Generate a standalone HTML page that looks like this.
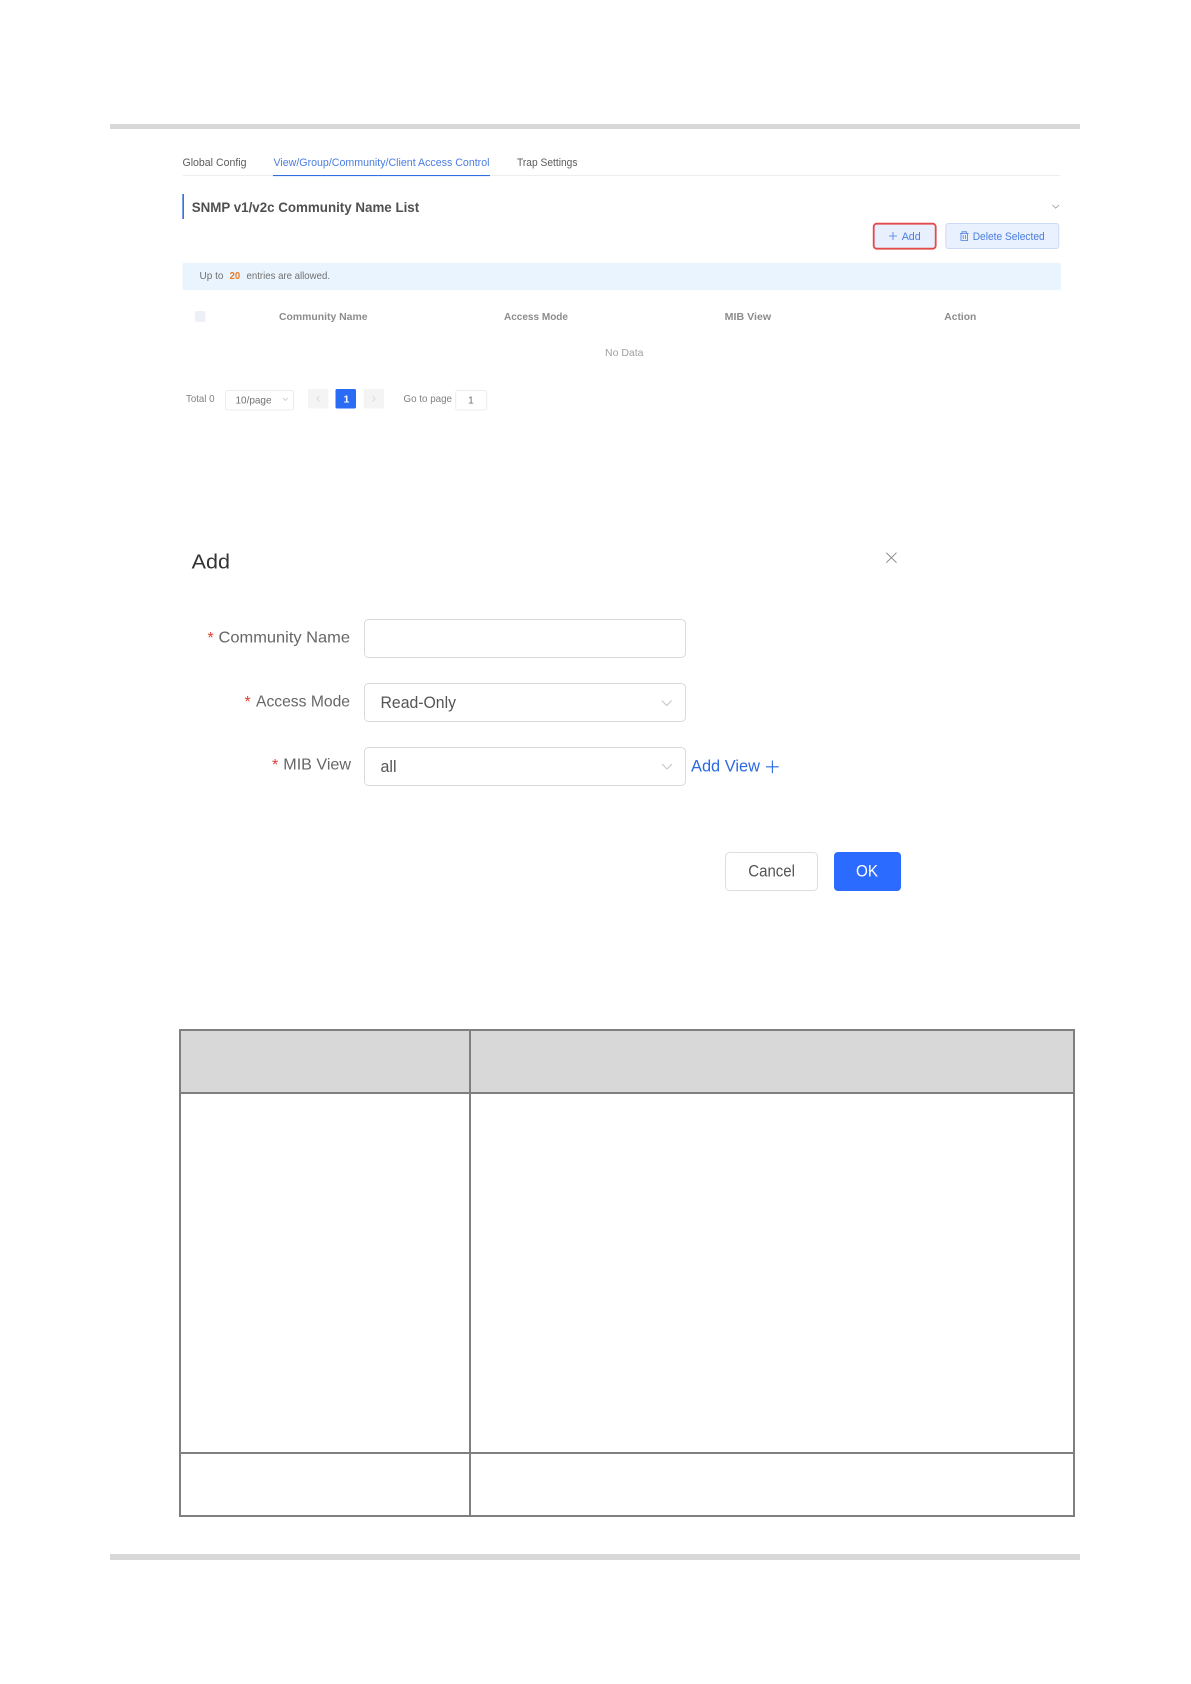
<!DOCTYPE html>
<html lang="en">
<head>
<meta charset="utf-8">
<title>SNMP Community</title>
<style>
html,body{margin:0;padding:0;background:#fff;}
svg{display:block;}
text{font-family:"Liberation Sans",Arial,sans-serif;}
</style>
</head>
<body>
<svg width="1191" height="1684" viewBox="0 0 1191 1684" xmlns="http://www.w3.org/2000/svg">
<rect width="1191" height="1684" fill="#fff"/>
<rect x="110" y="124" width="970" height="5" fill="#d8d8d8"/>
<rect x="110" y="1554" width="970" height="6" fill="#d8d8d8"/>

<g style="filter:blur(.35px)">
<!-- tabs -->
<rect x="183" y="175" width="877" height="1" fill="#eeeeee"/>
<rect x="273" y="175" width="217" height="1.1" fill="#2f6fe4"/>
<text x="182.5" y="166" font-size="11" fill="#5c5c5c" textLength="64" lengthAdjust="spacingAndGlyphs">Global Config</text>
<text x="273.5" y="166" font-size="11" fill="#4a7de0" textLength="216" lengthAdjust="spacingAndGlyphs">View/Group/Community/Client Access Control</text>
<text x="517" y="166" font-size="11" fill="#5c5c5c" textLength="60.5" lengthAdjust="spacingAndGlyphs">Trap Settings</text>

<!-- section title -->
<rect x="182.3" y="194" width="1.7" height="25" fill="#3a74e4"/>
<text x="191.7" y="212" font-size="14" font-weight="bold" fill="#505050" textLength="227.5" lengthAdjust="spacingAndGlyphs">SNMP v1/v2c Community Name List</text>
<path d="M1052.5 205l3.2 3.2 3.2-3.2" fill="none" stroke="#999" stroke-width=".8"/>

<!-- buttons -->
<rect x="873.7" y="223.7" width="62" height="25" rx="3" fill="#e8effe" stroke="#e24a4a" stroke-width="1.8"/>
<path d="M893 232v8M889 236h8" fill="none" stroke="#4a7de0" stroke-width=".8"/>
<text x="901.7" y="240" font-size="11" fill="#4a7de0" textLength="19" lengthAdjust="spacingAndGlyphs">Add</text>
<rect x="945.8" y="223.5" width="113" height="25" rx="2.5" fill="#e9f0fe" stroke="#ccdaf7" stroke-width="1"/>
<path d="M960 233.5h8.6M962 233.5v-1.7h4.5v1.7M961 233.5v7h6.6v-7M963.2 235v4M965.4 235v4" fill="none" stroke="#4a7de0" stroke-width=".8"/>
<text x="972.7" y="240" font-size="11" fill="#4a7de0" textLength="72" lengthAdjust="spacingAndGlyphs">Delete Selected</text>

<!-- info bar -->
<rect x="182.5" y="262.7" width="878.5" height="27.3" rx="2" fill="#eaf4fe"/>
<text x="199.5" y="279" font-size="10.5" fill="#707070" textLength="24" lengthAdjust="spacingAndGlyphs">Up to</text>
<text x="229.6" y="279" font-size="10.5" font-weight="bold" fill="#ea7a28" textLength="10.5" lengthAdjust="spacingAndGlyphs">20</text>
<text x="246.5" y="279" font-size="10.5" fill="#707070" textLength="83.5" lengthAdjust="spacingAndGlyphs">entries are allowed.</text>

<!-- table head -->
<rect x="195" y="311" width="10.5" height="11" rx="2" fill="#eef0f8"/>
<text x="279" y="320" font-size="10.5" font-weight="bold" fill="#8c8c8c" textLength="88.5" lengthAdjust="spacingAndGlyphs">Community Name</text>
<text x="504" y="320" font-size="10.5" font-weight="bold" fill="#8c8c8c" textLength="64" lengthAdjust="spacingAndGlyphs">Access Mode</text>
<text x="724.7" y="320" font-size="10.5" font-weight="bold" fill="#8c8c8c" textLength="46.5" lengthAdjust="spacingAndGlyphs">MIB View</text>
<text x="944.3" y="320" font-size="10.5" font-weight="bold" fill="#8c8c8c" textLength="32" lengthAdjust="spacingAndGlyphs">Action</text>
<text x="605" y="356" font-size="10.5" fill="#a0a0a0" textLength="38.5" lengthAdjust="spacingAndGlyphs">No Data</text>

<!-- pagination -->
<text x="186" y="402" font-size="10.5" fill="#808080" textLength="28.5" lengthAdjust="spacingAndGlyphs">Total 0</text>
<rect x="225.5" y="390.5" width="68" height="19.5" rx="2" fill="#fff" stroke="#ececec" stroke-width="1"/>
<text x="235.5" y="403.5" font-size="10.5" fill="#707070" textLength="36" lengthAdjust="spacingAndGlyphs">10/page</text>
<path d="M283 398l2.4 2.4 2.4-2.4" fill="none" stroke="#c4c4c4" stroke-width=".8"/>
<rect x="308" y="389" width="20.5" height="19.5" rx="1.5" fill="#f4f4f4"/>
<path d="M319.5 396l-2.6 2.7 2.6 2.7" fill="none" stroke="#d4d4d4" stroke-width=".8"/>
<rect x="335.5" y="389" width="20.5" height="19.5" rx="1.5" fill="#2a6bf5"/>
<text x="343.5" y="402.5" font-size="10.5" font-weight="bold" fill="#fff">1</text>
<rect x="363.7" y="389" width="20.3" height="19.5" rx="1.5" fill="#f4f4f4"/>
<path d="M372.5 396l2.6 2.7-2.6 2.7" fill="none" stroke="#d4d4d4" stroke-width=".8"/>
<text x="403.5" y="402" font-size="10.5" fill="#808080" textLength="48.5" lengthAdjust="spacingAndGlyphs">Go to page</text>
<rect x="455.7" y="390.5" width="31" height="19.5" rx="2" fill="#fff" stroke="#ececec" stroke-width="1"/>
<text x="468" y="403.5" font-size="10.5" fill="#707070">1</text>
</g>

<!-- dialog -->
<g style="filter:blur(.25px)">
<text x="191.7" y="568.7" font-size="20" fill="#333" textLength="38.3" lengthAdjust="spacingAndGlyphs">Add</text>
<path d="M886.3 552.7l10.2 10M896.5 552.7l-10.2 10" fill="none" stroke="#8a8a8a" stroke-width="1"/>

<text x="207.5" y="643" font-size="16" fill="#e03c31">*</text>
<text x="218.5" y="642.6" font-size="16" fill="#666" textLength="131.5" lengthAdjust="spacingAndGlyphs">Community Name</text>
<rect x="364.5" y="619.5" width="321" height="38" rx="4" fill="#fff" stroke="#dadada" stroke-width="1"/>

<text x="244.5" y="707" font-size="16" fill="#e03c31">*</text>
<text x="256" y="706.6" font-size="16" fill="#666" textLength="94" lengthAdjust="spacingAndGlyphs">Access Mode</text>
<rect x="364.5" y="683.5" width="321" height="38" rx="4" fill="#fff" stroke="#dadada" stroke-width="1"/>
<text x="380.5" y="708" font-size="16.5" fill="#555" textLength="75.5" lengthAdjust="spacingAndGlyphs">Read-Only</text>
<path d="M661.7 700.5l5 5 5-5" fill="none" stroke="#c4c4c4" stroke-width="1"/>

<text x="272" y="770" font-size="16" fill="#e03c31">*</text>
<text x="283.3" y="769.6" font-size="16" fill="#666" textLength="67.7" lengthAdjust="spacingAndGlyphs">MIB View</text>
<rect x="364.5" y="747.5" width="321" height="38" rx="4" fill="#fff" stroke="#dadada" stroke-width="1"/>
<text x="380.5" y="771.8" font-size="16.5" fill="#555" textLength="16" lengthAdjust="spacingAndGlyphs">all</text>
<path d="M662 764l5 5 5-5" fill="none" stroke="#c4c4c4" stroke-width="1"/>

<text x="691" y="771.4" font-size="16.5" fill="#2b6ae0" textLength="69" lengthAdjust="spacingAndGlyphs">Add View</text>
<path d="M772.4 760.5v12.6M766 766.8h12.7" fill="none" stroke="#2b6ae0" stroke-width="1.1"/>

<rect x="725.5" y="852.5" width="92" height="38" rx="4" fill="#fff" stroke="#dedede" stroke-width="1"/>
<text x="748.3" y="876.6" font-size="16.5" fill="#555" textLength="46.7" lengthAdjust="spacingAndGlyphs">Cancel</text>
<rect x="834" y="852" width="67" height="39" rx="4" fill="#2b6bff"/>
<text x="856" y="876.6" font-size="16.5" fill="#fff" textLength="22" lengthAdjust="spacingAndGlyphs">OK</text>
</g>

<!-- doc table -->
<rect x="180" y="1030" width="894" height="63" fill="#d8d8d8"/>
<g fill="#7f7f7f">
<rect x="179" y="1029" width="2" height="488"/>
<rect x="1073" y="1029" width="2" height="488"/>
<rect x="469" y="1029" width="2" height="488"/>
<rect x="179" y="1029" width="896" height="2"/>
<rect x="179" y="1092" width="896" height="2"/>
<rect x="179" y="1452" width="896" height="2"/>
<rect x="179" y="1515" width="896" height="2"/>
</g>
</svg>
</body>
</html>
